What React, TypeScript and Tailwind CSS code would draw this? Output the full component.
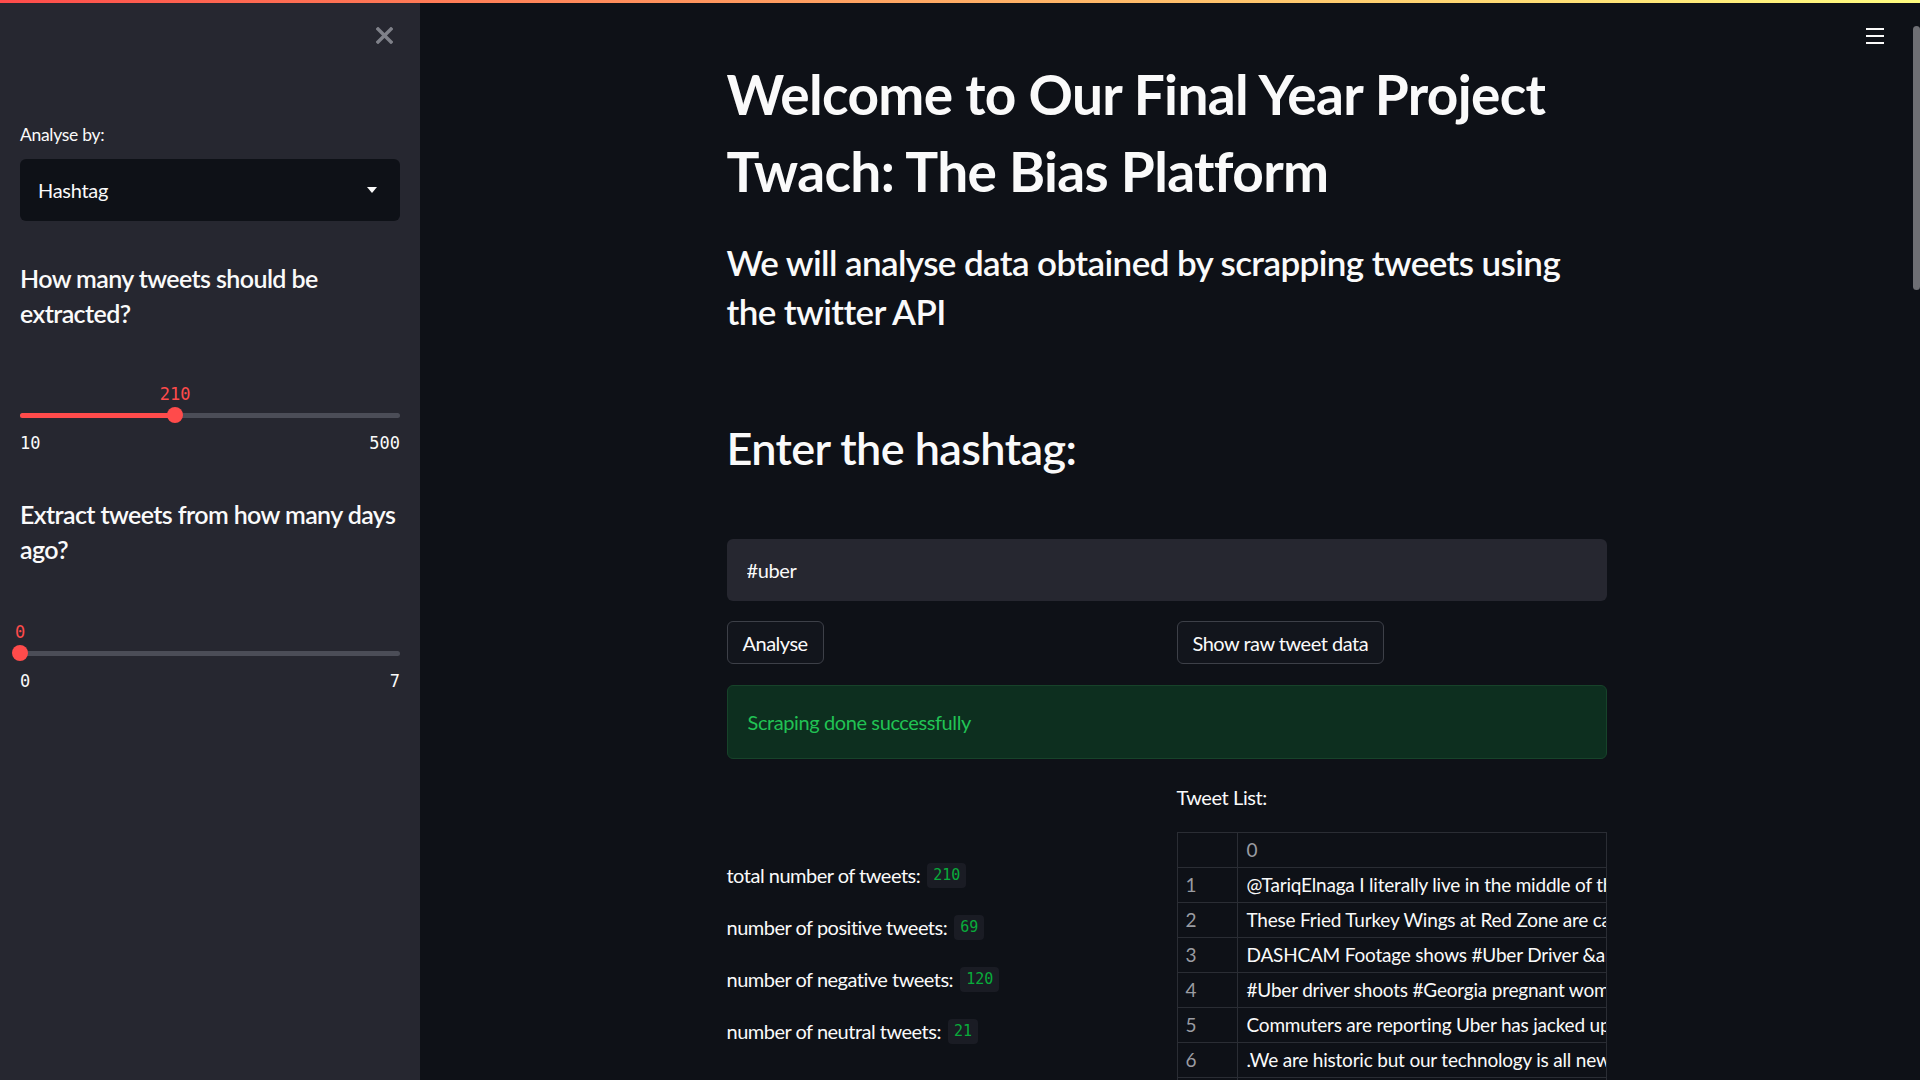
import { useState } from 'react';

const tweets = [
    '@TariqElnaga I literally live in the middle of the city and still cannot get a ride',
    'These Fried Turkey Wings at Red Zone are calling your name tonight',
    'DASHCAM Footage shows #Uber Driver &amp; passenger in heated argument',
    '#Uber driver shoots #Georgia pregnant woman after ride dispute',
    'Commuters are reporting Uber has jacked up prices again this morning',
    '.We are historic but our technology is all new and we keep moving',
    'Drivers say the new #Uber app update is making trips harder to accept',
];

const stats = [
    { label: 'total number of tweets:', value: '210' },
    { label: 'number of positive tweets:', value: '69' },
    { label: 'number of negative tweets:', value: '120' },
    { label: 'number of neutral tweets:', value: '21' },
];

function Slider({ value, min, max }: { value: number; min: number; max: number }) {
    const pct = ((value - min) / (max - min)) * 100;
    return (
        <div className="font-['DejaVu_Sans_Mono',monospace] text-[17px]">
            <div className="relative h-[24px] leading-[24px]">
                <span className="absolute top-0 -translate-x-1/2 text-[#ff4b4b]" style={{ left: `${pct}%` }}>
                    {value}
                </span>
            </div>
            <div className="relative mt-[1px] flex h-[16px] items-center">
                <div className="h-[5px] w-full rounded-full bg-[#4b4d57]" />
                <div className="absolute left-0 h-[5px] rounded-full bg-[#ff4b4b]" style={{ width: `${pct}%` }} />
                <div
                    className="absolute h-[16px] w-[16px] -translate-x-1/2 rounded-full bg-[#ff4b4b]"
                    style={{ left: `${pct}%` }}
                />
            </div>
            <div className="mt-[8px] flex justify-between leading-[24px] text-[#fafafa]">
                <span>{min}</span>
                <span>{max}</span>
            </div>
        </div>
    );
}

export default function App() {
    const [hashtag, setHashtag] = useState('#uber');

    return (
        <div className="relative flex h-[1080px] w-[1920px] overflow-hidden bg-[#0e1117] font-['Lato',sans-serif] text-[#fafafa]">
            {/* streamlit decoration bar */}
            <div className="absolute left-0 top-0 z-10 h-[3px] w-full bg-gradient-to-r from-[#ff4b4b] to-[#fffd80]" />

            {/* Sidebar */}
            <aside className="flex w-[420px] shrink-0 flex-col bg-[#262730] px-[20px]">
                <div className="flex justify-end pr-[7px] pt-[27px]">
                    <svg width="17" height="17" viewBox="0 0 17 17">
                        <path d="M2 2 L15 15 M15 2 L2 15" stroke="#7f8189" strokeWidth="3.4" strokeLinecap="square" />
                    </svg>
                </div>

                <div className="mt-[79px] text-[17.5px] leading-[24px] tracking-[-0.3px]">Analyse by:</div>
                <div className="mt-[12px] flex h-[62px] items-center justify-between rounded-[6px] bg-[#0e1117] pl-[18px] pr-[23px] text-[20px] tracking-[-0.3px]">
                    <span>Hashtag</span>
                    <svg width="10" height="6" viewBox="0 0 10 6">
                        <path d="M0 0 H10 L5 6 Z" fill="#fafafa" />
                    </svg>
                </div>

                <h3 className="mt-[40px] text-[25px] font-semibold leading-[35px] tracking-[-0.6px]">
                    How many tweets should be extracted?
                </h3>
                <div className="mt-[51px]">
                    <Slider value={210} min={10} max={500} />
                </div>

                <h3 className="mt-[42px] text-[25px] font-semibold leading-[35px] tracking-[-0.6px]">
                    Extract tweets from how many days ago?
                </h3>
                <div className="mt-[53px]">
                    <Slider value={0} min={0} max={7} />
                </div>
            </aside>

            {/* Main */}
            <main className="flex-1">
                <div className="mx-auto w-[880px] pt-[56px]">
                    <h1 className="text-[55px] font-bold leading-[77px] tracking-[-0.65px]">
                        Welcome to Our Final Year Project
                        <br />
                        Twach: The Bias Platform
                    </h1>
                    <h3 className="mt-[28px] text-[35px] font-semibold leading-[49px] tracking-[-0.6px]">
                        We will analyse data obtained by scrapping tweets using the twitter API
                    </h3>
                    <h2 className="mt-[85px] text-[45px] font-semibold leading-[54px] tracking-[-0.6px]">
                        Enter the hashtag:
                    </h2>

                    <input
                        value={hashtag}
                        onChange={(e) => setHashtag(e.target.value)}
                        className="mt-[64px] block h-[62px] w-full rounded-[6px] bg-[#262730] px-[20px] text-[20px] tracking-[-0.4px] text-[#fafafa] outline-none"
                    />

                    <div className="mt-[20px] grid grid-cols-2 gap-[20px]">
                        <div>
                            <button className="h-[43px] rounded-[6px] border border-[#3d4048] bg-[#12151c] px-[15px] text-[20px] tracking-[-0.5px]">
                                Analyse
                            </button>
                        </div>
                        <div>
                            <button className="h-[43px] rounded-[6px] border border-[#3d4048] bg-[#12151c] px-[15px] text-[20px] tracking-[-0.5px]">
                                Show raw tweet data
                            </button>
                        </div>
                    </div>

                    <div className="mt-[21px] flex h-[74px] items-center rounded-[6px] border border-[#17432a] bg-[#0d2f1f] px-[20px] text-[20px] tracking-[-0.4px] text-[#21c354]">
                        Scraping done successfully
                    </div>

                    <div className="mt-[26px] grid grid-cols-2 gap-[20px]">
                        <div className="flex flex-col gap-[24px] pt-[76px]">
                            {stats.map((s) => (
                                <div key={s.label} className="flex h-[28px] items-center gap-[7px] text-[20px]">
                                    <span className="tracking-[-0.5px]">{s.label}</span>
                                    <code className="flex h-[25px] items-center rounded-[4px] bg-[#1a1c24] px-[6px] font-['DejaVu_Sans_Mono',monospace] text-[15px] text-[#09ab3b]">
                                        {s.value}
                                    </code>
                                </div>
                            ))}
                        </div>

                        <div>
                            <div className="text-[20px] leading-[24px] tracking-[-0.4px]">Tweet List:</div>
                            <div className="mt-[23px] overflow-hidden border border-[#2a2d34] text-[19px] tracking-[-0.2px]">
                                <div className="flex h-[35px] border-b border-[#2a2d34]">
                                    <div className="w-[60px] shrink-0 border-r border-[#2a2d34]" />
                                    <div className="flex items-center px-[9px] text-[#9a9ca2]">0</div>
                                </div>
                                {tweets.map((t, i) => (
                                    <div key={i} className="flex h-[35px] border-b border-[#2a2d34]">
                                        <div className="flex w-[60px] shrink-0 items-center border-r border-[#2a2d34] px-[8px] text-[#9a9ca2]">
                                            {i + 1}
                                        </div>
                                        <div className="flex min-w-0 items-center overflow-hidden whitespace-nowrap px-[9px]">
                                            {t}
                                        </div>
                                    </div>
                                ))}
                            </div>
                        </div>
                    </div>
                </div>
            </main>

            {/* scrollbar */}
            <div className="w-[7px] shrink-0 pt-[26px]">
                <div className="h-[264px] w-[7px] rounded-full bg-[#6e6f74]" />
            </div>

            {/* hamburger menu */}
            <div className="absolute right-[36px] top-[28px] flex w-[18px] flex-col gap-[5px]">
                <div className="h-[2px] bg-[#fafafa]" />
                <div className="h-[2px] bg-[#fafafa]" />
                <div className="h-[2px] bg-[#fafafa]" />
            </div>
        </div>
    );
}
